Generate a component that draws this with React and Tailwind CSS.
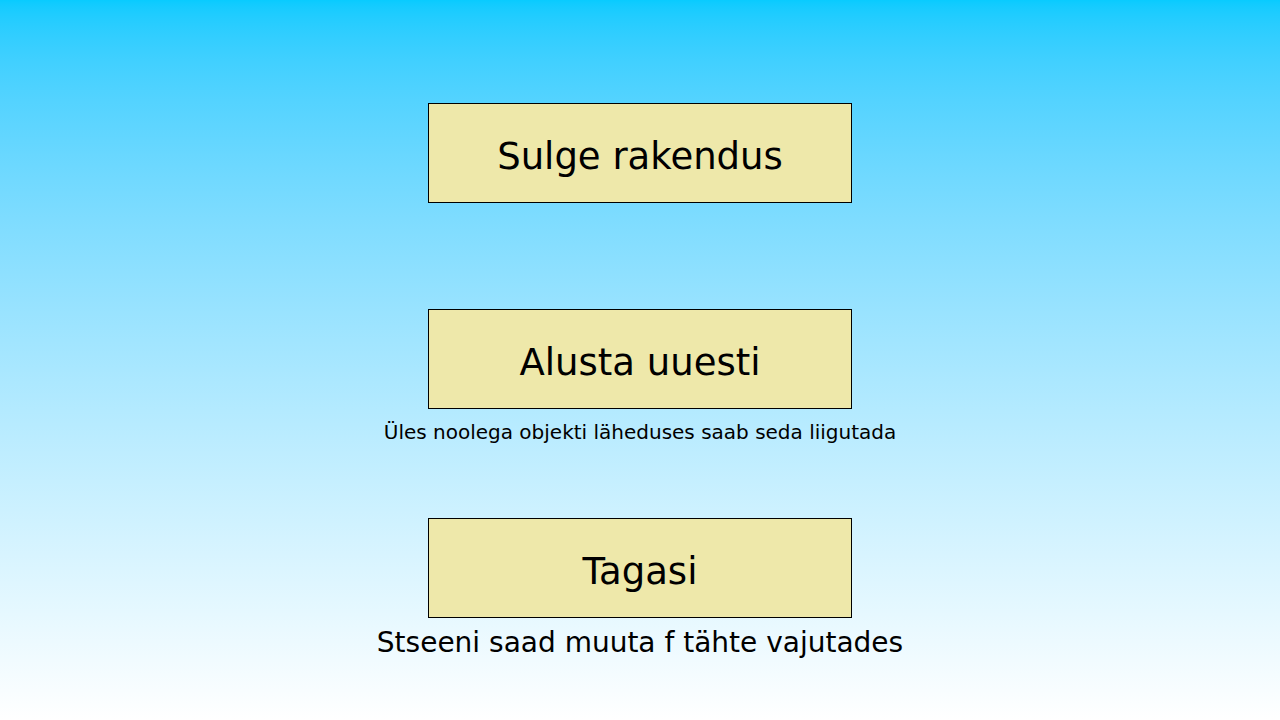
export default function App() {
  return (
    <div className="h-[720px] w-full bg-gradient-to-b from-[#08cbff] to-white flex flex-col items-center pt-[103px] text-black font-['Comic_Sans_MS','DejaVu_Sans',sans-serif]">
      <button className="w-[424px] h-[100px] bg-[#eee8aa] border border-black flex items-center justify-center pt-[6px] text-[37px] leading-none">
        Sulge rakendus
      </button>

      <button className="mt-[106px] w-[424px] h-[100px] bg-[#eee8aa] border border-black flex items-center justify-center pt-[6px] text-[37px] leading-none">
        Alusta uuesti
      </button>
      <p className="mt-[8px] text-[20px] leading-[30px]">
        Üles noolega objekti läheduses saab seda liigutada
      </p>

      <button className="mt-[71px] w-[424px] h-[100px] bg-[#eee8aa] border border-black flex items-center justify-center pt-[6px] text-[37px] leading-none">
        Tagasi
      </button>
      <p className="mt-[5px] text-[28px] leading-[40px]">
        Stseeni saad muuta f tähte vajutades
      </p>
    </div>
  );
}
